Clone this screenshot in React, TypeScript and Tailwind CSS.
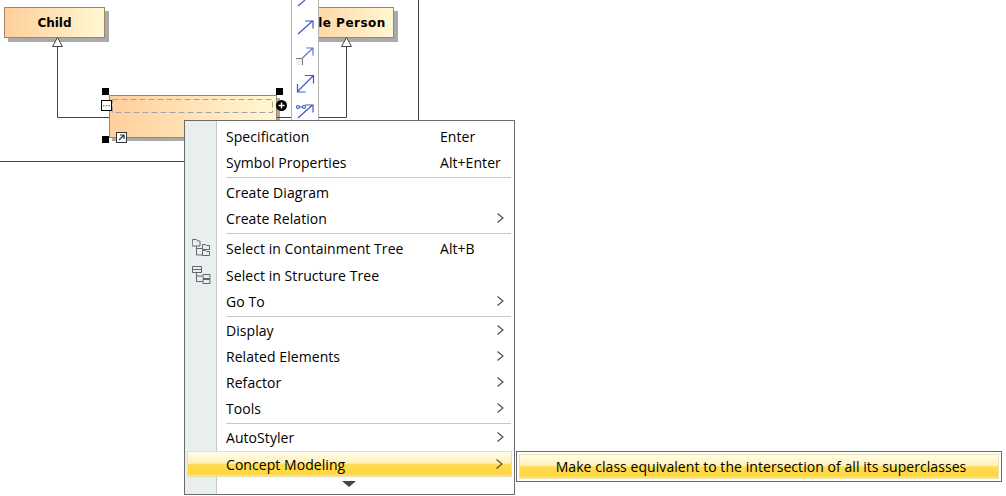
type Item = {
  label: string;
  shortcut?: string;
  arrow?: boolean;
  icon?: "containment" | "structure";
  sep?: string;
  extra?: string;
};

const items: Item[] = [
  { label: "Specification", shortcut: "Enter" },
  { label: "Symbol Properties", shortcut: "Alt+Enter", sep: "mb-px" },
  { label: "Create Diagram" },
  { label: "Create Relation", arrow: true, sep: "mb-px" },
  { label: "Select in Containment Tree", shortcut: "Alt+B", icon: "containment", extra: "mb-px" },
  { label: "Select in Structure Tree", icon: "structure" },
  { label: "Go To", arrow: true, sep: "mb-0" },
  { label: "Display", arrow: true },
  { label: "Related Elements", arrow: true },
  { label: "Refactor", arrow: true },
  { label: "Tools", arrow: true, sep: "mb-0" },
  { label: "AutoStyler", arrow: true },
];

const highlight =
  "bg-[linear-gradient(to_bottom,#fffdf0_0%,#fff1b4_46%,#ffdc55_52%,#ffd63c_90%,#ffe68a_100%)] border border-[#e9e0ae]";
const classBox = "border border-[#a5855f] bg-[linear-gradient(to_right,#ffcf9c,#fff8d2)]";

function Chevron() {
  return (
    <svg width="7" height="10" viewBox="0 0 7 10" fill="none" stroke="#4a4a4a" strokeWidth="1.1">
      <path d="M0.5 0.5L6 5L0.5 9.5" />
    </svg>
  );
}

function TreeIcon({ kind }: { kind: "containment" | "structure" }) {
  return (
    <svg width="20" height="20" viewBox="0 0 20 20" fill="none" stroke="#62686a" strokeWidth="1">
      {kind === "containment" ? (
        <>
          <path d="M0.5 1.5h4l1 1.5h2.5v5h-8z" />
          <path d="M4.5 8v9h5.5M4.5 10.5h5.5" />
          <path d="M10.5 6.5h3l1 1h3v4h-7zM10.5 12.5h3l1 1h3v4h-7z" />
        </>
      ) : (
        <>
          <path d="M0.5 1.5h9v6h-9zM0.5 4.5h9" />
          <path d="M4.5 7.5v9h6M4.5 11h6" />
          <path d="M11 9.5h7v4h-7zM11 14.5h7v4h-7z" />
        </>
      )}
    </svg>
  );
}

function ToolbarIcons() {
  return (
    <svg width="26" height="120" viewBox="0 0 26 120" fill="none" stroke="#3f55c4" strokeWidth="1.2">
      <path d="M6 6L13 0" />
      <path d="M6 34L20.5 21M13 21h8v7.5" />
      <rect x="4" y="59" width="6" height="6" fill="#f1f1f1" stroke="none" />
      <path d="M10.5 58L21 48M14 48h7v7.5" stroke="#6474c8" />
      <path d="M4 58.5h6.5V65" stroke="#777" strokeWidth="1" />
      <path d="M6 91L21 76M13 75.5h8.5v8M5.5 84v8h8" />
      <path d="M6 118L20.5 105M13 105h8v7.5M7 107h4" />
      <circle cx="6" cy="107" r="1.5" />
      <circle cx="12" cy="107" r="1.5" />
    </svg>
  );
}

export default function App() {
  return (
    <div className="relative h-[496px] w-[1006px] overflow-hidden bg-white font-['Open_Sans',sans-serif] text-[14px] tracking-[0.06px] text-black">
      {/* diagram nodes */}
      <div className={`absolute left-[4px] top-[7px] flex h-[31px] w-[101px] items-center justify-center font-['DejaVu_Sans',sans-serif] text-[12px] font-bold tracking-normal shadow-[4px_4px_0_#aaaaaa] ${classBox}`}>
        Child
      </div>
      <div className={`absolute left-[297px] top-[7px] flex h-[31px] w-[97px] items-center justify-center whitespace-nowrap pr-[8px] font-['DejaVu_Sans',sans-serif] text-[12px] font-bold tracking-[0.5px] shadow-[4px_4px_0_#aaaaaa] ${classBox}`}>
        Male Person
      </div>
      <div className={`absolute left-[109px] top-[95px] h-[43px] w-[168px] shadow-[3px_3px_0_#aaaaaa] ${classBox}`} />

      {/* connectors, frame and the dashed compartments */}
      <svg width="1006" height="496" className="absolute left-0 top-0" fill="none" stroke="#444">
        <path d="M0 161.5H200M418.5 0V161" />
        <path d="M57.5 46V117.5H109M346.5 46V117.5H277" />
        <path d="M57.5 37.5L52.5 46.5H62.5Z" fill="#fff" />
        <path d="M346.5 37.5L341.5 46.5H351.5Z" fill="#fff" />
        <path d="M112.5 99.5H272.5V112.5H112.5V99.5" stroke="#a3a3a3" strokeDasharray="6 3" />
      </svg>

      {/* selection handles */}
      <div className="absolute left-[102px] top-[88px] size-[7px] bg-black" />
      <div className="absolute left-[102px] top-[136px] size-[7px] bg-black" />
      <div className="absolute left-[276px] top-[88px] size-[7px] bg-black" />
      <div className="absolute left-[101px] top-[100px] flex size-[11px] items-center justify-center border border-black bg-white">
        <svg width="7" height="3" viewBox="0 0 7 3" fill="#777">
          <rect x="0" y="1" width="1.4" height="1.4" />
          <rect x="2.8" y="1" width="1.4" height="1.4" />
          <rect x="5.6" y="1" width="1.4" height="1.4" />
        </svg>
      </div>
      <div className="absolute left-[116px] top-[132px] flex size-[11px] items-center justify-center border border-[#333] bg-white">
        <svg width="7" height="7" viewBox="0 0 7 7" fill="none" stroke="#333" strokeWidth="1.2">
          <path d="M1 6L6 1M2 1h4v4" />
        </svg>
      </div>
      <div className="absolute left-[276px] top-[100px] flex size-[11px] items-center justify-center rounded-full bg-black">
        <svg width="7" height="7" viewBox="0 0 7 7" stroke="#fff" strokeWidth="1.4">
          <path d="M3.5 0.5v6M0.5 3.5h6" />
        </svg>
      </div>

      {/* smart manipulator toolbar */}
      <div className="absolute left-[291px] top-0 flex h-[120px] w-[28px] justify-center border-x border-[#b4b4b4] bg-white">
        <ToolbarIcons />
      </div>

      {/* context menu */}
      <div className="absolute left-[184px] top-[120px] flex h-[375px] w-[331px] flex-col border border-[#6b6b6b] bg-white pt-[2px]">
        <div className="absolute inset-y-0 left-0 w-[32px] border-r border-[#c4c8c8] bg-[#e9eeee]" />
        {items.map((item) => (
          <div key={item.label} className="relative">
            <div className={`flex h-[26px] items-center whitespace-nowrap ${item.extra ?? ""}`}>
              <span className="w-[41px] pl-[7px]">{item.icon && <TreeIcon kind={item.icon} />}</span>
              <span className="w-[214px]">{item.label}</span>
              {item.shortcut && <span>{item.shortcut}</span>}
              {item.arrow && (
                <span className="ml-auto mr-[10px]">
                  <Chevron />
                </span>
              )}
            </div>
            {item.sep && <div className={`ml-[41px] mr-[3px] mt-[2px] h-px bg-[#c8c8c8] ${item.sep}`} />}
          </div>
        ))}
        <div className={`relative mx-[2px] mt-px flex h-[26px] items-center pl-[38px] ${highlight}`}>
          Concept Modeling
          <span className="ml-auto mr-[8px]">
            <Chevron />
          </span>
        </div>
        <div className="relative ml-[157px] mt-[4px] h-0 w-0 border-x-[7px] border-t-[6px] border-x-transparent border-t-[#444]" />
      </div>

      {/* submenu */}
      <div className="absolute left-[516px] top-[451px] flex h-[31px] w-[486px] border border-[#6b6b6b] bg-white p-[2px]">
        <div className={`flex flex-1 items-center justify-center whitespace-nowrap pl-[4px] ${highlight}`}>
          Make class equivalent to the intersection of all its superclasses
        </div>
      </div>
    </div>
  );
}
